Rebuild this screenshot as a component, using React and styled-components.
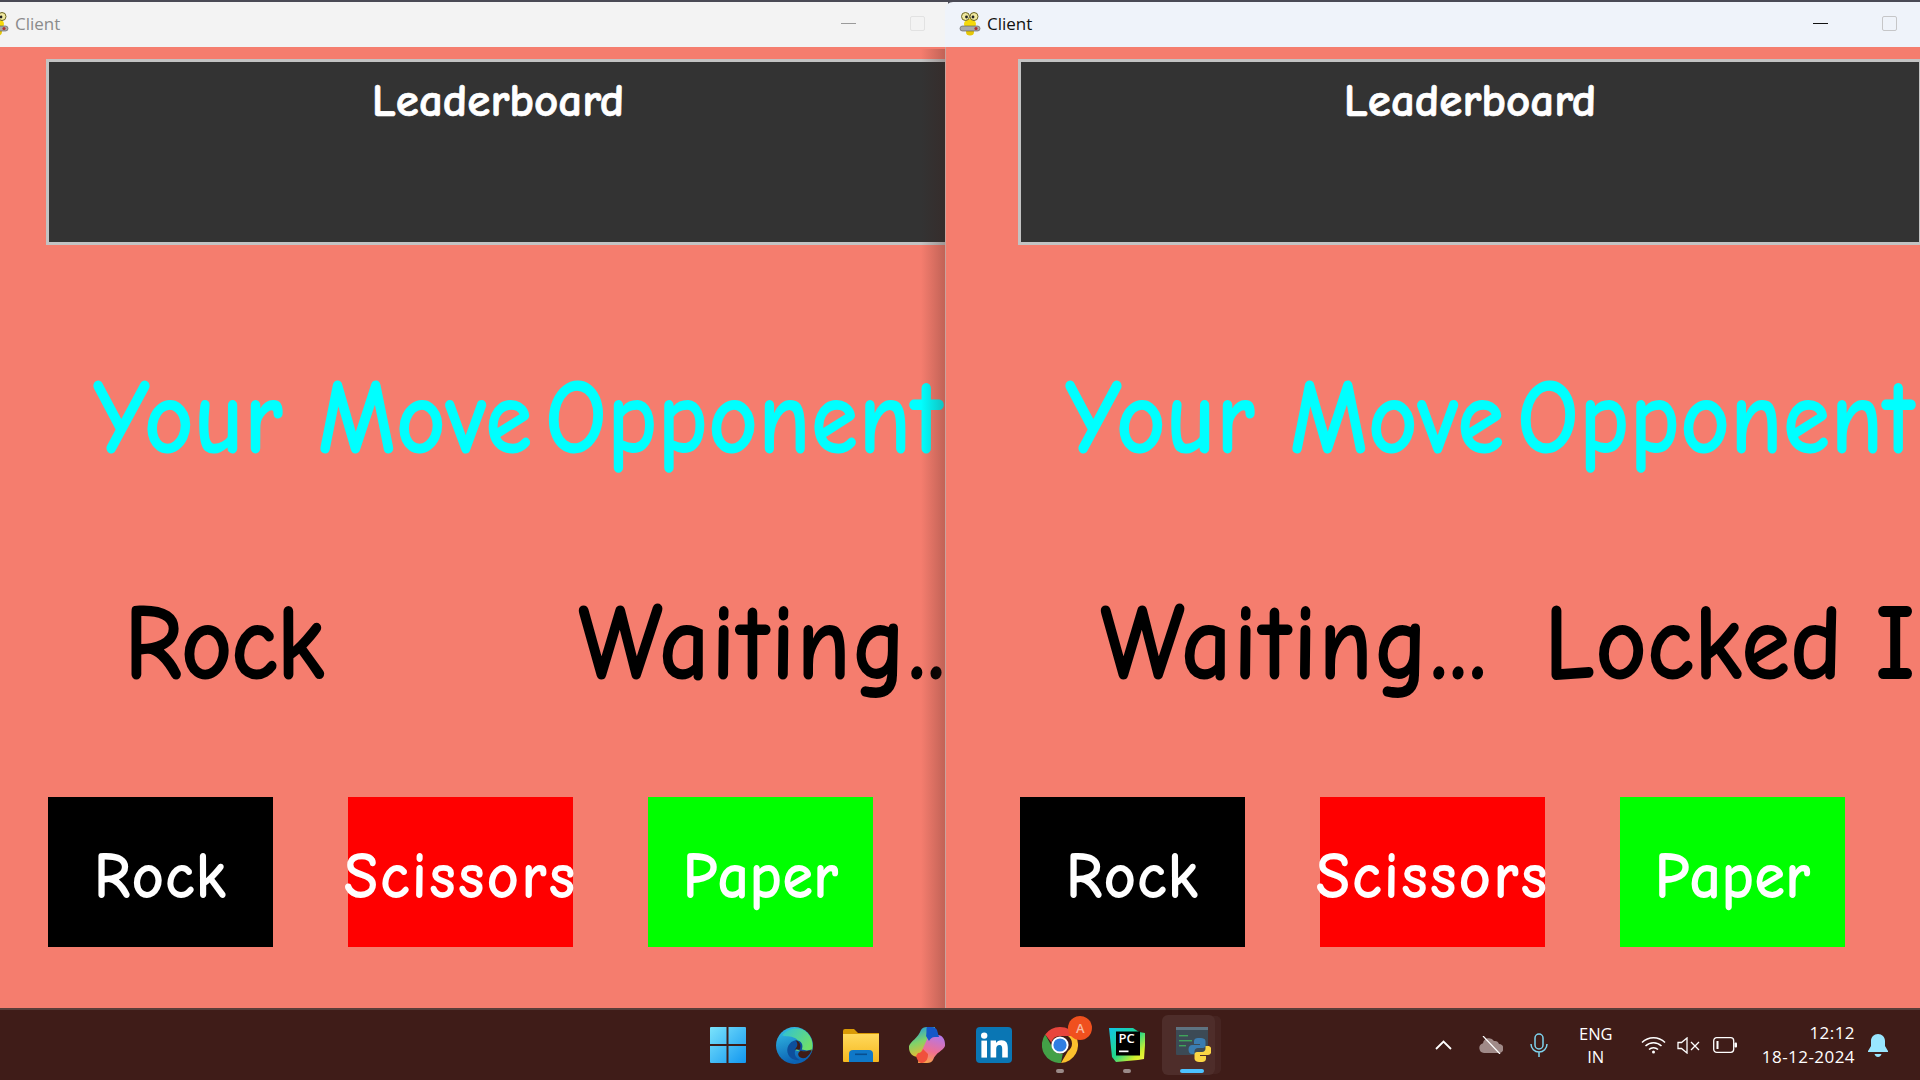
import React from "react";
import styled, { createGlobalStyle } from "styled-components";

const GlobalStyle = createGlobalStyle`
  html, body {
    margin: 0;
    padding: 0;
    overflow: hidden;
  }
  * {
    box-sizing: border-box;
  }
`;

const COMIC = `"Comic Sans MS", "Comic Neue", "Open Sans", sans-serif`;
const UI = `"Open Sans", "Noto Sans", sans-serif`;

const Desktop = styled.div`
  width: 1920px;
  height: 1080px;
  overflow: hidden;
  display: flex;
  flex-direction: column;
  background: #4a4a55;
`;

const Windows = styled.div`
  display: flex;
  height: 1008px;
  padding-top: 2px;
  flex: none;
`;

const Window = styled.div`
  width: 975px;
  flex: none;
  position: relative;
  overflow: hidden;
  display: flex;
  flex-direction: column;
  margin-left: ${(p) => (p.$active ? "-3px" : "-27px")};
  z-index: ${(p) => (p.$active ? 2 : 1)};
  border-top-left-radius: ${(p) => (p.$active ? "8px" : "0")};
`;

const ShadowEdge = styled.div`
  position: absolute;
  top: 47px;
  bottom: 0;
  right: 3px;
  width: 24px;
  background: linear-gradient(90deg, rgba(60, 30, 25, 0), rgba(60, 30, 25, 0.28));
  z-index: 3;
`;

const TitleBar = styled.div`
  height: 45px;
  flex: none;
  display: flex;
  align-items: center;
  padding: 0 0 2px 14px;
  background: ${(p) => (p.$active ? "#eff3fa" : "#f3f3f3")};
  color: ${(p) => (p.$active ? "#111" : "#8b8b8b")};
  font-family: ${UI};
  font-size: 17px;
`;

const TitleText = styled.span`
  margin-left: 6px;
`;

const MinButton = styled.div`
  margin-left: auto;
  width: 15px;
  height: 1px;
  background: ${(p) => (p.$active ? "#111" : "#9a9a9a")};
`;

const MaxButton = styled.div`
  margin-left: 54px;
  margin-right: 23px;
  width: 15px;
  height: 15px;
  border: 1.5px solid ${(p) => (p.$active ? "#c6c6c8" : "#e2e2e2")};
  border-radius: 2px;
`;

const Surface = styled.div`
  flex: 1;
  background: #f57d6e;
  padding: 12px 0 0 73px;
  display: flex;
  flex-direction: column;
  ${(p) => (p.$active ? "border-left: 1px solid #c9a29b; padding-left: 72px;" : "")}
`;

const Leaderboard = styled.div`
  width: 904px;
  height: 186px;
  flex: none;
  background: #333;
  border: 3px solid #c3c3c3;
  text-align: center;
  color: #fff;
  font-family: ${COMIC};
  font-weight: 700;
  font-size: 47px;
  line-height: 79px;
  -webkit-text-stroke: 0.7px #fff;
`;

const ScoreRow = styled.div`
  display: flex;
  flex: none;
  height: ${(p) => p.$height}px;
  margin-bottom: ${(p) => p.$after}px;
  align-items: center;
  margin-left: -73px;
  color: ${(p) => p.$color};
  font-family: ${COMIC};
  font-weight: 700;
  font-size: ${(p) => p.$size}px;
  white-space: nowrap;
`;

const ScoreCell = styled.div`
  flex: none;
  width: ${(p) => p.$width}px;
  margin-left: ${(p) => p.$left}px;
  letter-spacing: ${(p) => p.$spacing || 0}px;
  word-spacing: ${(p) => p.$wordGap || 0}px;
  transform: scaleY(1.1);
`;

const Buttons = styled.div`
  display: flex;
  gap: 75px;
  flex: none;
  margin-left: 2px;
`;

const MoveButton = styled.div`
  width: 225px;
  height: 150px;
  flex: none;
  display: flex;
  align-items: center;
  justify-content: center;
  padding-top: 9px;
  background: ${(p) => p.$color};
  color: #fff;
  font-family: ${COMIC};
  font-weight: 700;
  font-size: 63px;
  letter-spacing: ${(p) => p.$spacing || 0}px;
  white-space: nowrap;
`;

const ButtonLabel = styled.span`
  display: inline-block;
  transform: scaleY(1.05);
`;

const Taskbar = styled.div`
  height: 72px;
  flex: none;
  position: relative;
  z-index: 4;
  display: flex;
  align-items: center;
  padding-left: 695px;
  background: #3f1c18;
  border-top: 2px solid #5a3d39;
  color: #fff;
  font-family: ${UI};
  font-size: 17px;
`;

const AppSlot = styled.div`
  width: 66.4px;
  height: 60px;
  flex: none;
  position: relative;
  display: flex;
  align-items: center;
  justify-content: center;
  ${(p) =>
    p.$current
      ? `background: rgba(255,255,255,0.08);
         border-radius: 6px;
         box-shadow: 7px 0 0 -1px rgba(255,255,255,0.04);
         width: 53px;
         margin-left: 2px;
         padding-left: 9px;`
      : ""}
`;

const RunDot = styled.div`
  position: absolute;
  bottom: 2px;
  left: ${(p) => (p.$current ? "calc(50% + 4px)" : "50%")};
  transform: translateX(-50%);
  height: 4px;
  border-radius: 2px;
  width: ${(p) => (p.$current ? "24px" : "8px")};
  background: ${(p) => (p.$current ? "#4cc2ff" : "#9a8a88")};
`;

const Badge = styled.div`
  position: absolute;
  top: 1px;
  right: 1px;
  width: 24px;
  height: 24px;
  border-radius: 50%;
  background: #f0501e;
  color: #f7b9a0;
  font-size: 13px;
  font-weight: 600;
  display: flex;
  align-items: center;
  justify-content: center;
`;

const Tray = styled.div`
  margin-left: auto;
  display: flex;
  align-items: center;
  padding-right: 32px;
`;

const TrayIcon = styled.div`
  display: flex;
  flex: none;
  margin-left: ${(p) => p.$left}px;
`;

const Lang = styled.div`
  margin-left: 30px;
  width: 36px;
  text-align: center;
  line-height: 23px;
  font-size: 16.5px;
`;

const Clock = styled.div`
  margin-left: 25px;
  text-align: right;
  line-height: 24px;
  letter-spacing: 0.45px;
`;

const GameIcon = () => (
  <svg width="22" height="25" viewBox="0 0 22 25">
    <ellipse cx="11" cy="13" rx="6" ry="5" fill="#f5d90a" />
    <ellipse cx="11" cy="21" rx="4" ry="3.5" fill="#e5c708" />
    <circle cx="6.5" cy="5.5" r="4" fill="#f0e9a0" stroke="#6b6420" />
    <circle cx="15" cy="5.5" r="4" fill="#f0e9a0" stroke="#6b6420" />
    <circle cx="7.5" cy="6" r="1.4" fill="#222" />
    <circle cx="14" cy="6" r="1.4" fill="#222" />
    <rect x="1" y="15" width="20" height="5" rx="2.5" fill="#a9a9a9" stroke="#555" strokeWidth=".6" />
    <circle cx="17" cy="17.5" r="1.6" fill="#a33" />
  </svg>
);

const WindowsIcon = () => (
  <svg width="36" height="36" viewBox="0 0 36 36">
    <defs>
      <linearGradient id="win" x1="0" y1="0" x2="1" y2="1">
        <stop offset="0" stopColor="#7be3fb" />
        <stop offset="1" stopColor="#1297f0" />
      </linearGradient>
    </defs>
    <path
      d="M1 0h15.5v17H0V1a1 1 0 0 1 1-1zM18.5 0H35a1 1 0 0 1 1 1v16H18.5zM0 19h16.5v17H1a1 1 0 0 1-1-1zM18.5 19H36v16a1 1 0 0 1-1 1H18.5z"
      fill="url(#win)"
    />
  </svg>
);

const EdgeIcon = () => (
  <svg width="37" height="37" viewBox="0 0 36 36">
    <defs>
      <linearGradient id="edgeA" x1="0" y1="0" x2="0.3" y2="1">
        <stop offset="0" stopColor="#36c3e8" />
        <stop offset="1" stopColor="#0b62b4" />
      </linearGradient>
      <linearGradient id="edgeB" x1="0" y1="0" x2="1" y2="0.6">
        <stop offset="0" stopColor="#2ec0d8" />
        <stop offset="1" stopColor="#6fe06a" />
      </linearGradient>
    </defs>
    <circle cx="18" cy="18" r="18" fill="url(#edgeA)" />
    <path d="M6 8C12 0 27 -2 33 9c3 5 3 10 2 14-3 1-14 2-17-1 5-2 6-8 1-11C14 8 9 10 6 8z" fill="url(#edgeB)" />
    <path d="M35 22c-3 3-12 3-15-1-3 3-2 9 3 11-4 1-9-1-11-5-3-6 1-13 7-14 6 0 8 5 6 9 3 1 7 1 10 0z" fill="#0d4f9c" />
    <path d="M18 22c3-2 4-6 1-9 4 1 6 5 4 9z" fill="#3f1c18" />
    <path d="M24 23c4 1 8 1 11-1-1 3-3 6-6 8-3 1-6 0-7-2-1-2 0-4 2-5z" fill="#3f1c18" />
  </svg>
);

const FolderIcon = () => (
  <svg width="36" height="33" viewBox="0 0 36 33">
    <defs>
      <linearGradient id="folder" x1="0" y1="0" x2="0" y2="1">
        <stop offset="0" stopColor="#ffd95c" />
        <stop offset="1" stopColor="#f5b81f" />
      </linearGradient>
    </defs>
    <path d="M0 2a2 2 0 0 1 2-2h9l4 4h21v6H0z" fill="#d99a06" />
    <path d="M0 5h36v27a1 1 0 0 1-1 1H1a1 1 0 0 1-1-1z" fill="url(#folder)" />
    <path d="M6 33v-8a4 4 0 0 1 4-4h16a4 4 0 0 1 4 4v8z" fill="#0f78c8" />
    <rect x="12" y="24.5" width="12" height="1.6" fill="#084f8f" />
  </svg>
);

const CopilotIcon = () => (
  <svg width="36" height="36" viewBox="0 0 36 36">
    <defs>
      <linearGradient id="copA" x1="0.2" y1="0" x2="0.5" y2="1">
        <stop offset="0" stopColor="#1d9be0" />
        <stop offset="0.5" stopColor="#7fd36a" />
        <stop offset="1" stopColor="#f4b82c" />
      </linearGradient>
      <linearGradient id="copB" x1="0.7" y1="0" x2="0.4" y2="1">
        <stop offset="0" stopColor="#b377e8" />
        <stop offset="0.6" stopColor="#ef6f93" />
        <stop offset="1" stopColor="#f7a24e" />
      </linearGradient>
    </defs>
    <path d="M12 3c1-2 3-3 6-3h8v8l-8 22H9c-5 0-9-4-9-9v-2c2-5 9-8 12-16z" fill="url(#copA)" />
    <path d="M24 33c-1 2-3 3-6 3h-9l1-6 10-22h9c4 0 7 4 7 9v2c-2 5-9 6-12 14z" fill="url(#copB)" />
    <path d="M18 0h5c2 0 4 1 5 3l2 7h-4c-3 0-5 2-6 4l-3-5c1-4 0-8 1-9z" fill="#1558c8" />
    <path d="M9 26c3 0 4-2 5-4l5 5c0 4-1 8-6 9h-1c-3-1-4-4-5-7z" fill="#f0503c" />
  </svg>
);

const LinkedInIcon = () => (
  <svg width="36" height="36" viewBox="0 0 36 36">
    <rect width="36" height="36" rx="4" fill="#0a76b4" />
    <circle cx="8.2" cy="8.6" r="3.2" fill="#fff" />
    <rect x="5.4" y="13.6" width="5.6" height="17" fill="#fff" />
    <path d="M14.6 13.6H20v2.4c1-1.6 2.8-2.8 5.4-2.8 4.8 0 6.4 3 6.4 7.8v9.6h-5.6v-8.6c0-2.2-.4-4-2.6-4s-3.4 1.6-3.4 4v8.6h-5.6z" fill="#fff" />
  </svg>
);

const ChromeIcon = () => (
  <svg width="36" height="36" viewBox="0 0 36 36">
    <path d="M18 0a18 18 0 0 1 15.6 9H18a9 9 0 0 0-8.6 6.4L3.2 7.6A18 18 0 0 1 18 0z" fill="#e8453c" />
    <path d="M33.6 9A18 18 0 0 1 19 36l7-12a9 9 0 0 0 0-15z" fill="#fbc02d" />
    <path d="M19 36A18 18 0 0 1 3.2 7.6l7 12.4a9 9 0 0 0 10.6 6.6z" fill="#43a047" />
    <circle cx="18" cy="18" r="8.6" fill="#fff" />
    <circle cx="18" cy="18" r="6.6" fill="#2f7de1" />
  </svg>
);

const PyCharmIcon = () => (
  <svg width="36" height="36" viewBox="0 0 36 36">
    <defs>
      <linearGradient id="pcA" x1="0" y1="0" x2="1" y2="1">
        <stop offset="0" stopColor="#10c5e8" />
        <stop offset="0.5" stopColor="#21d789" />
        <stop offset="0.8" stopColor="#d4f02c" />
        <stop offset="1" stopColor="#fcf84a" />
      </linearGradient>
    </defs>
    <path d="M0 1h24l6 4 6 1 0 12-1 14-6 1-22 2-4-5z" fill="url(#pcA)" />
    <rect x="7" y="4.500" width="24" height="24" fill="#000" />
    <text x="9.500" y="16" fill="#fff" fontFamily="Open Sans, sans-serif" fontSize="13" fontWeight="600">
      PC
    </text>
    <rect x="10" y="23.500" width="9.500" height="1.700" fill="#fff" />
  </svg>
);

const PythonAppIcon = () => (
  <svg width="36" height="36" viewBox="0 0 36 36">
    <rect x="1" y="0" width="32" height="28" rx="1" fill="#3c4a55" />
    <rect x="1" y="0" width="32" height="3" fill="#5f7381" />
    <rect x="4" y="8" width="9" height="1.4" fill="#3fa35a" />
    <rect x="4" y="13" width="13" height="1.4" fill="#3fa35a" />
    <rect x="4" y="18" width="7" height="1.4" fill="#3fa35a" />
    <path d="M24 11c-4 0-5 1.600-5 3.500V17h6v1h-8c-2 0-3.500 1.500-3.500 4.500s1.500 4.500 3.500 4.500h2.500v-2.500c0-2 1.500-3.500 3.500-3.500h5c1.500 0 2.500-1 2.500-2.500v-4c0-1.500-1-3-3-3.200-1-.2-2-.3-3.500-.300z" fill="#3a7cb0" />
    <path d="M26 35c4 0 5-1.600 5-3.500V29h-6v-1h8c2 0 3.500-1.500 3.500-4.500S35 19 33 19h-2.500v2.500c0 2-1.500 3.500-3.500 3.500h-5c-1.500 0-2.500 1-2.500 2.500v4c0 1.500 1 3 3 3.200 1 .2 2 .3 3.500.3z" fill="#fbd644" />
  </svg>
);

const Chevron = () => (
  <svg width="17" height="10" viewBox="0 0 17 10" fill="none" stroke="#fff" strokeWidth="1.8">
    <path d="M1 9l7.500-7.500L16 9" />
  </svg>
);

const CloudOff = () => (
  <svg width="24" height="18" viewBox="0 0 24 18">
    <path d="M5 17a5 5 0 0 1-1-9.800A6 6 0 0 1 15 5a4.500 4.500 0 0 1 5 3 4.500 4.500 0 0 1 0 9z" fill="#a08a88" />
    <path d="M4 0l17 18" stroke="#fff" strokeWidth="1.2" />
  </svg>
);

const Mic = () => (
  <svg width="18" height="24" viewBox="0 0 18 24" fill="none" stroke="#7fd4ee" strokeWidth="1.500">
    <rect x="5" y="1" width="8" height="15" rx="4" />
    <path d="M1 11a8 8 0 0 0 16 0M9 19v5" />
  </svg>
);

const Wifi = () => (
  <svg width="25" height="18" viewBox="0 0 25 18" fill="none" stroke="#fff" strokeWidth="1.500">
    <path d="M1 6.500c6.500-6.500 16.500-6.500 23 0M4.500 10c4.500-4.500 11.500-4.500 16 0M8 13.500c2.500-2.500 6.500-2.500 9 0" />
    <circle cx="12.500" cy="16" r="1.500" fill="#fff" stroke="none" />
  </svg>
);

const Muted = () => (
  <svg width="23" height="17" viewBox="0 0 23 17" fill="none" stroke="#fff" strokeWidth="1.300">
    <path d="M1 5.500h3.500L10 1v15l-5.500-4.500H1z" />
    <path d="M14 5l8 8M22 5l-8 8" />
  </svg>
);

const Battery = () => (
  <svg width="24" height="16" viewBox="0 0 24 16" fill="none" stroke="#fff" strokeWidth="1.300">
    <rect x=".7" y=".7" width="20" height="14.600" rx="3" />
    <rect x="3.500" y="4" width="2" height="8" fill="#fff" stroke="none" />
    <rect x="21.500" y="5.500" width="2.500" height="5" rx="1" fill="#fff" stroke="none" />
  </svg>
);

const Bell = () => (
  <svg width="20" height="23" viewBox="0 0 20 23" fill="#99e6ff">
    <path d="M10 0c4 0 7 3 7 7v5l3 5v1H0v-1l3-5V7c0-4 3-7 7-7z" />
    <path d="M6.500 20h7c-.5 2-2 3-3.500 3s-3-1-3.500-3z" />
  </svg>
);

function GameWindow({ active, own, opponent }) {
  return (
    <Window $active={active}>
      <TitleBar $active={active}>
        <GameIcon />
        <TitleText>Client</TitleText>
        <MinButton $active={active} />
        <MaxButton $active={active} />
      </TitleBar>
      <Surface $active={active}>
        <Leaderboard>Leaderboard</Leaderboard>
        <ScoreRow $height={346} $after={4} $size={97} $color="#00ffff">
          <ScoreCell $left={120} $width={452}>Your Move</ScoreCell>
          <ScoreCell $left={0} $width={500}>Opponent</ScoreCell>
        </ScoreRow>
        <ScoreRow $height={96} $after={106} $size={100} $color="#000">
          <ScoreCell $left={own.left} $width={own.width} $spacing={own.spacing}>{own.text}</ScoreCell>
          <ScoreCell $left={0} $width={500} $spacing={opponent.spacing} $wordGap={opponent.wordGap}>
            {opponent.text}
          </ScoreCell>
        </ScoreRow>
        <Buttons>
          <MoveButton $color="#000" $spacing={1}><ButtonLabel>Rock</ButtonLabel></MoveButton>
          <MoveButton $color="#f00" $spacing={2}><ButtonLabel>Scissors</ButtonLabel></MoveButton>
          <MoveButton $color="#0f0"><ButtonLabel>Paper</ButtonLabel></MoveButton>
        </Buttons>
      </Surface>
      {!active && <ShadowEdge />}
    </Window>
  );
}

export default function App() {
  return (
    <Desktop>
      <GlobalStyle />
      <Windows>
        <GameWindow
          active={false}
          own={{ text: "Rock", left: 151, width: 454, spacing: -1.5 }}
          opponent={{ text: "Waiting...", spacing: 1.3 }}
        />
        <GameWindow
          active
          own={{ text: "Waiting...", left: 155, width: 444, spacing: 1.3 }}
          opponent={{ text: "Locked In", wordGap: -3 }}
        />
      </Windows>
      <Taskbar>
        <AppSlot><WindowsIcon /></AppSlot>
        <AppSlot><EdgeIcon /></AppSlot>
        <AppSlot><FolderIcon /></AppSlot>
        <AppSlot><CopilotIcon /></AppSlot>
        <AppSlot><LinkedInIcon /></AppSlot>
        <AppSlot>
          <ChromeIcon />
          <Badge>A</Badge>
          <RunDot />
        </AppSlot>
        <AppSlot>
          <PyCharmIcon />
          <RunDot />
        </AppSlot>
        <AppSlot $current>
          <PythonAppIcon />
          <RunDot $current />
        </AppSlot>
        <Tray>
          <TrayIcon $left={0}><Chevron /></TrayIcon>
          <TrayIcon $left={27}><CloudOff /></TrayIcon>
          <TrayIcon $left={27}><Mic /></TrayIcon>
          <Lang>ENG<br />IN</Lang>
          <TrayIcon $left={27}><Wifi /></TrayIcon>
          <TrayIcon $left={11}><Muted /></TrayIcon>
          <TrayIcon $left={13}><Battery /></TrayIcon>
          <Clock>12:12<br />18-12-2024</Clock>
          <TrayIcon $left={13}><Bell /></TrayIcon>
        </Tray>
      </Taskbar>
    </Desktop>
  );
}
